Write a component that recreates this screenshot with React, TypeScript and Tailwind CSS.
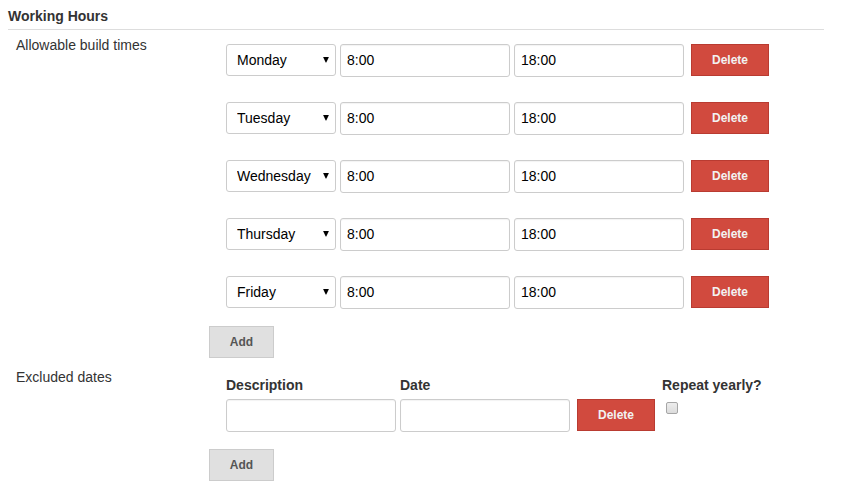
import { useState } from "react";

const DAYS = ["Monday", "Tuesday", "Wednesday", "Thursday", "Friday", "Saturday", "Sunday"];

const fieldClass =
  "h-[33px] w-[170px] rounded-[3px] border border-[#cccccc] bg-white px-1.5 pb-0.5 text-sm text-black shadow-[inset_0_1px_1px_rgba(0,0,0,0.05)]";

function DeleteButton({ onClick }: { onClick: () => void }) {
  return (
    <button
      type="button"
      onClick={onClick}
      className="h-8 w-[78px] border border-[#b93b31] bg-[#d14a3e] text-xs font-bold text-[#f2f2f2]"
    >
      Delete
    </button>
  );
}

function AddButton({ onClick }: { onClick: () => void }) {
  return (
    <button
      type="button"
      onClick={onClick}
      className="mt-[17px] block h-8 w-[65px] border border-[#cccccc] bg-[#e0e0e0] text-xs font-bold text-[#555555]"
    >
      Add
    </button>
  );
}

function DaySelect({ day }: { day: string }) {
  return (
    <div className="relative mr-1 w-[110px]">
      <select
        aria-label="Day"
        defaultValue={day}
        className="block h-8 w-full appearance-none rounded-[3px] border border-[#cccccc] bg-white pl-2.5 text-sm text-black"
      >
        {DAYS.map((name) => (
          <option key={name}>{name}</option>
        ))}
      </select>
      <svg
        aria-hidden="true"
        viewBox="0 0 6 6"
        className="pointer-events-none absolute top-[13px] right-[7px] size-1.5"
      >
        <path d="M0.1 0H5.9L3.3 5.6H2.7Z" fill="#000" />
      </svg>
    </div>
  );
}

export default function App() {
  const [times, setTimes] = useState(
    DAYS.slice(0, 5).map((day, id) => ({ id, day, start: "8:00", end: "18:00" })),
  );
  const [dates, setDates] = useState([0]);

  return (
    <form className="bg-white pt-1.5 pr-[22px] pb-4 pl-2 font-['Liberation_Sans',Arial,sans-serif] text-sm/5 text-[#333333]">
      <h2 className="border-b border-[#dddddd] pb-[3px] text-sm/5 font-bold">Working Hours</h2>

      <section className="flex pb-1">
        <h3 className="w-[201px] shrink-0 pt-[5px] pl-2">Allowable build times</h3>
        <div className="pt-3.5">
          <div className="flex flex-col gap-[25px] pl-[17px]">
            {times.map((time) => (
              <div key={time.id} className="flex items-start">
                <DaySelect day={time.day} />
                <input aria-label="Start time" defaultValue={time.start} className={fieldClass} />
                <input aria-label="End time" defaultValue={time.end} className={`${fieldClass} mr-[7px] ml-1`} />
                <DeleteButton onClick={() => setTimes(times.filter((t) => t.id !== time.id))} />
              </div>
            ))}
          </div>
          <AddButton
            onClick={() => setTimes([...times, { id: Date.now(), day: "Monday", start: "8:00", end: "18:00" }])}
          />
        </div>
      </section>

      <section className="flex">
        <h3 className="w-[201px] shrink-0 pt-[5px] pl-2">Excluded dates</h3>
        <div className="pt-[13px]">
          <div className="flex flex-col gap-[25px] pl-[17px]">
            {dates.map((id) => (
              <div key={id} className="flex items-end">
                <div className="mr-1 flex flex-col gap-1">
                  <label htmlFor={`description-${id}`} className="font-bold">
                    Description
                  </label>
                  <input id={`description-${id}`} className={fieldClass} />
                </div>
                <div className="mr-[7px] flex flex-col gap-1">
                  <label htmlFor={`date-${id}`} className="font-bold">
                    Date
                  </label>
                  <input id={`date-${id}`} className={fieldClass} />
                </div>
                <div className="mr-[7px] pb-px">
                  <DeleteButton onClick={() => setDates(dates.filter((d) => d !== id))} />
                </div>
                <div className="flex flex-col gap-[7px] self-start">
                  <label htmlFor={`repeat-${id}`} className="font-bold">
                    Repeat yearly?
                  </label>
                  <input
                    id={`repeat-${id}`}
                    type="checkbox"
                    className="ml-1 size-3 appearance-none rounded-xs border border-[#a6a6a6] bg-linear-to-b from-[#ededed] to-[#dcdcdc] checked:from-[#555555] checked:to-[#555555]"
                  />
                </div>
              </div>
            ))}
          </div>
          <AddButton onClick={() => setDates([...dates, Date.now()])} />
        </div>
      </section>
    </form>
  );
}
